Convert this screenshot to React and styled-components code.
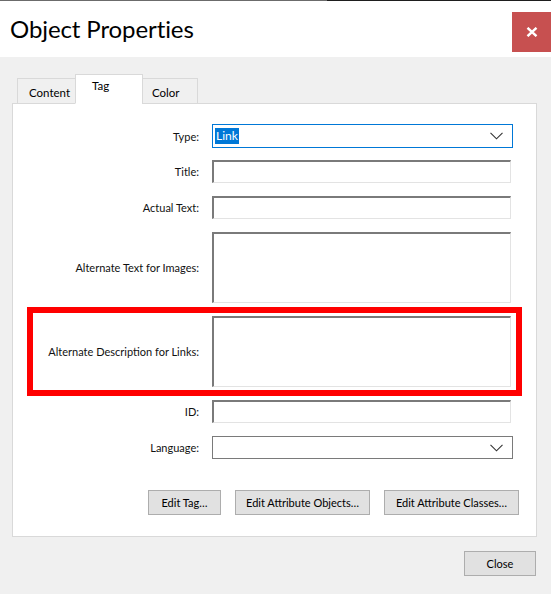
import React from 'react';
import styled, { createGlobalStyle } from 'styled-components';

const GlobalStyle = createGlobalStyle`
    html, body {
        margin: 0;
        padding: 0;
        background: #f0f0f0;
        font-family: Lato, "Noto Sans", sans-serif;
        color: #000;
    }
`

const Window = styled.div`
    width: 551px;
    height: 594px;
    background: #f0f0f0;
    display: flex;
    flex-direction: column;
    overflow: hidden;
`
const Header = styled.div`
    height: 56px;
    background: #fff;
    border-top: 1px solid #1e1e1e;
    border-image: linear-gradient(to right, #6b6b6b 0 327px, #1e1e1e 327px) 1 0 0 0;
    display: flex;
    align-items: flex-start;
    justify-content: space-between;
`
const Title = styled.h1`
    margin: 12px 0 0 10px;
    font-size: 24px;
    font-weight: 400;
    line-height: 32px;
    letter-spacing: -0.1px;
`
const CloseX = styled.button`
    margin-top: 11px;
    width: 39px;
    height: 40px;
    border: none;
    background: #c75050;
    display: flex;
    align-items: center;
    justify-content: center;
    padding: 0;
`
const Body = styled.div`
    padding: 18px 15px 0 12px;
`
const Tabs = styled.div`
    display: flex;
    align-items: flex-end;
    padding-left: 5px;
    height: 29px;
    margin-bottom: -1px;
    position: relative;
    z-index: 1;
`
const Tab = styled.div`
    box-sizing: border-box;
    width: ${p => p.w}px;
    height: ${p => (p.active ? 30 : 26)}px;
    padding-left: ${p => p.pad}px;
    padding-top: ${p => (p.active ? 4 : 7)}px;
    font-size: 11.5px;
    background: ${p => (p.active ? '#fff' : '#f0f0f0')};
    border: 1px solid #d9d9d9;
    border-bottom: ${p => (p.active ? '1px solid #fff' : '1px solid #d9d9d9')};
    margin-left: ${p => (p.first ? 0 : -1)}px;
    color: #000;
`
const Panel = styled.div`
    box-sizing: border-box;
    width: 525px;
    height: 434px;
    background: #fff;
    border: 1px solid #d9d9d9;
    padding: 20px 23px 0 23px;
    display: flex;
    flex-direction: column;
`
const Row = styled.div`
    display: grid;
    grid-template-columns: 163px 1fr;
    column-gap: 13px;
    align-items: center;
    height: ${p => p.h}px;
    margin-bottom: ${p => p.mb ?? 13}px;
    ${p => p.highlight && `
        outline: 6px solid #ff0000;
        outline-offset: 3px;
    `}
`
const Label = styled.label`
    text-align: right;
    font-size: 11px;
    color: #111;
    white-space: nowrap;
`
const TextField = styled.div`
    box-sizing: border-box;
    width: 299px;
    height: 100%;
    background: #fff;
    border-top: 2px solid #7a7a7a;
    border-left: 2px solid #7a7a7a;
    border-right: 1px solid #e3e3e3;
    border-bottom: 1px solid #e3e3e3;
`
const Select = styled.div`
    box-sizing: border-box;
    width: 301px;
    height: 100%;
    border: 1px solid ${p => (p.focused ? '#0078d7' : '#7a7a7a')};
    background: #fff;
    display: flex;
    align-items: center;
    justify-content: space-between;
    padding: 0 9px 0 2px;
    font-size: 12px;
`
const Selected = styled.span`
    background: #0078d7;
    color: #fff;
    padding: 1px 1px;
    line-height: 14px;
`
const Buttons = styled.div`
    display: flex;
    justify-content: flex-end;
    gap: 14px;
    margin-right: -6px;
    margin-top: 31px;
`
const Button = styled.button`
    box-sizing: border-box;
    width: ${p => p.w}px;
    height: 25px;
    background: #e1e1e1;
    border: 1px solid #adadad;
    font-family: Lato, "Noto Sans", sans-serif;
    font-size: 11px;
    color: #000;
    padding: 0;
`
const Footer = styled.div`
    display: flex;
    justify-content: flex-end;
    margin-top: 14px;
`

const Chevron = () => (
    <svg width="13" height="8" viewBox="0 0 13 8">
        <path d="M0.5 0.8 L6.5 6.8 L12.5 0.8" fill="none" stroke="#333" strokeWidth="1.1" />
    </svg>
)

const App = () => {
    return (
        <Window>
            <GlobalStyle />
            <Header>
                <Title>Object Properties</Title>
                <CloseX>
                    <svg width="12" height="10" viewBox="0 0 12 10">
                        <path d="M1.5 0.8 L10.5 9.2 M10.5 0.8 L1.5 9.2" stroke="#fff" strokeWidth="2.4" />
                    </svg>
                </CloseX>
            </Header>
            <Body>
                <Tabs>
                    <Tab first w={59} pad={11}>Content</Tab>
                    <Tab active w={68} pad={16}>Tag</Tab>
                    <Tab w={56} pad={9}>Color</Tab>
                </Tabs>
                <Panel>
                    <Row h={24} mb={12}>
                        <Label>Type:</Label>
                        <Select focused><Selected>Link</Selected><Chevron /></Select>
                    </Row>
                    <Row h={23}>
                        <Label>Title:</Label>
                        <TextField />
                    </Row>
                    <Row h={23}>
                        <Label>Actual Text:</Label>
                        <TextField />
                    </Row>
                    <Row h={71}>
                        <Label>Alternate Text for Images:</Label>
                        <TextField />
                    </Row>
                    <Row h={71} highlight>
                        <Label>Alternate Description for Links:</Label>
                        <TextField />
                    </Row>
                    <Row h={23}>
                        <Label>ID:</Label>
                        <TextField />
                    </Row>
                    <Row h={23} mb={0}>
                        <Label>Language:</Label>
                        <Select><span /><Chevron /></Select>
                    </Row>
                    <Buttons>
                        <Button w={73}>Edit Tag…</Button>
                        <Button w={135}>Edit Attribute Objects…</Button>
                        <Button w={135}>Edit Attribute Classes…</Button>
                    </Buttons>
                </Panel>
                <Footer>
                    <Button w={72}>Close</Button>
                </Footer>
            </Body>
        </Window>
    )
}

export default App
